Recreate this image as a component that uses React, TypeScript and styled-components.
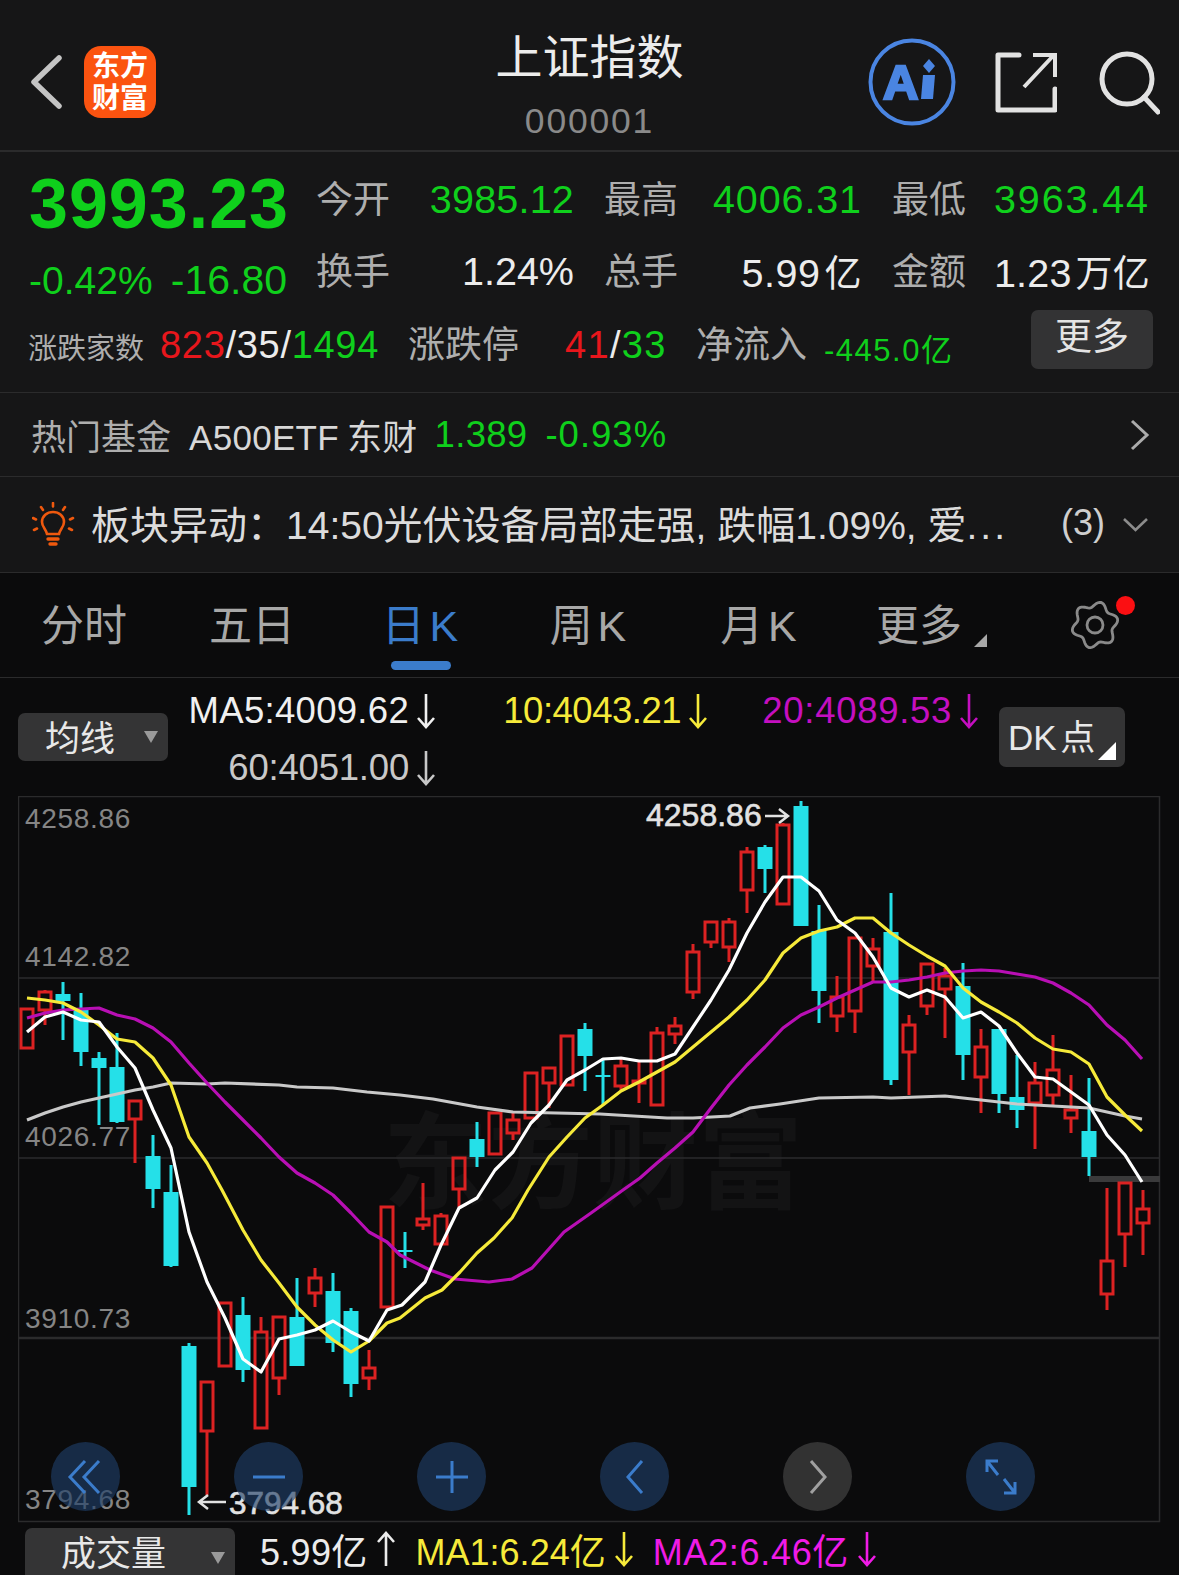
import React from 'react'
import styled, { createGlobalStyle } from 'styled-components'

const GREEN = '#0fd01c'
const RED = '#e8161c'
const CANDLE_RED = '#dc2222'
const CYAN = '#25e0e8'
const YELLOW = '#f6ea3a'
const MAGENTA = '#f01be6'
const BLUE = '#3b7ccb'

const GlobalStyle = createGlobalStyle`
  html, body {
    margin: 0;
    padding: 0;
    background: #0b0b0c;
  }
  * {
    box-sizing: border-box;
  }
`

const Page = styled.div`
  width: 1179px;
  height: 1575px;
  overflow: hidden;
  background: #0b0b0c;
  color: #ececec;
  font-family: 'Liberation Sans', 'Noto Sans CJK SC', sans-serif;
`

const Header = styled.header`
  height: 152px;
  padding-top: 14px;
  display: grid;
  grid-template-columns: 1fr auto 1fr;
  align-items: center;
  background: #161617;
  border-bottom: 2px solid #2b2b2c;
`

const HeaderLeft = styled.div`
  display: flex;
  align-items: center;
  padding-left: 30px;
  gap: 22px;
`

const Logo = styled.div`
  width: 72px;
  height: 72px;
  border-radius: 17px;
  background: #fb5310;
  color: #fff;
  font-size: 28px;
  font-weight: 700;
  line-height: 32px;
  text-align: center;
  padding-top: 5px;
`

const TitleBlock = styled.div`
  text-align: center;
  margin-top: 5px;
`

const Title = styled.div`
  font-size: 47px;
  line-height: 60px;
  color: #ececec;
`

const Code = styled.div`
  font-size: 35.5px;
  line-height: 40px;
  margin-top: 13px;
  letter-spacing: 1.8px;
  color: #8a8a8a;
`

const HeaderRight = styled.div`
  display: flex;
  align-items: center;
  justify-content: flex-end;
  padding-right: 19px;
  gap: 39px;
`

const Quote = styled.section`
  height: 241px;
  background: #161617;
  border-bottom: 1px solid #2b2b2c;
  padding-top: 11px;
`

const QuoteTop = styled.div`
  display: flex;
  height: 144px;
  padding-left: 29px;
`

const PriceBlock = styled.div`
  width: 258px;
  margin-right: 29px;
`

const Price = styled.div`
  font-size: 70px;
  line-height: 82px;
  font-weight: 700;
  letter-spacing: 1px;
  color: ${GREEN};
  white-space: nowrap;
`

const ChangeRow = styled.div`
  display: flex;
  justify-content: space-between;
  align-items: baseline;
  line-height: 70px;
  color: ${GREEN};
`

const ChangePct = styled.span`
  font-size: 39px;
`

const ChangeVal = styled.span`
  font-size: 41px;
`

const StatsGrid = styled.div`
  display: grid;
  grid-template-columns: repeat(3, 258px);
  grid-auto-rows: 72px;
  column-gap: 30px;
`

const Stat = styled.div`
  display: flex;
  justify-content: space-between;
  align-items: center;
`

const StatLabel = styled.span`
  font-size: 37px;
  padding-bottom: 4px;
  color: #aeaeae;
`

const StatValue = styled.span<{ $green?: boolean; $track?: number }>`
  font-size: 39.5px;
  letter-spacing: ${(p) => p.$track ?? 0.2}px;
  color: ${(p) => (p.$green ? GREEN : '#ececec')};
  white-space: nowrap;
`

const Unit = styled.span`
  font-size: 37px;
  margin-left: 4px;
`

const BreadthRow = styled.div`
  display: grid;
  grid-template-columns: 132px 248px 157px 131px 128px 207px 122px;
  align-items: center;
  height: 76px;
  padding-left: 28px;
`

const SmallLabel = styled.span`
  font-size: 29px;
  color: #aeaeae;
  padding-top: 2px;
`

const BreadthLabel = styled.span`
  font-size: 37px;
  color: #aeaeae;
  padding-bottom: 6px;
`

const BreadthValue = styled.span<{ $track: number }>`
  font-size: 38px;
  letter-spacing: ${(p) => p.$track}px;
  color: #ececec;
  white-space: nowrap;
`

const Tone = styled.span<{ $color: string }>`
  color: ${(p) => p.$color};
`

const Inflow = styled.span`
  font-size: 31px;
  letter-spacing: 1.5px;
  color: ${GREEN};
  padding-top: 4px;
  white-space: nowrap;
`

const MoreButton = styled.div`
  height: 59px;
  margin-top: -12px;
  border-radius: 7px;
  background: #333334;
  font-size: 37px;
  line-height: 56px;
  text-align: center;
  color: #e4e4e4;
`

const FundRow = styled.div`
  height: 84px;
  display: flex;
  align-items: center;
  padding: 0 29px 0 31px;
  background: #161617;
  border-bottom: 1px solid #2b2b2c;
  white-space: nowrap;
`

const FundLabel = styled.span`
  font-size: 35px;
  color: #aeaeae;
  margin-right: 18px;
`

const FundName = styled.span`
  font-size: 35px;
  letter-spacing: 0.3px;
  word-spacing: -2px;
  color: #d8d8d8;
  margin-right: 17px;
`

const FundValue = styled.span<{ $track: number }>`
  font-size: 36.5px;
  letter-spacing: ${(p) => p.$track}px;
  color: ${GREEN};
  margin-right: 18px;
`

const RowEnd = styled.span`
  margin-left: auto;
  display: flex;
  align-items: center;
`

const NoticeRow = styled.div`
  height: 96px;
  display: flex;
  align-items: center;
  padding: 0 31px 0 32px;
  background: #161617;
  border-bottom: 1px solid #2b2b2c;
  white-space: nowrap;
`

const NoticeText = styled.span`
  font-size: 39px;
  margin-left: 15px;
  padding-bottom: 5px;
  color: #dcdcdc;
`

const Dots = styled.span`
  letter-spacing: 3px;
`

const NoticeCount = styled.span`
  font-size: 36px;
  padding-bottom: 4px;
  color: #cfcfcf;
  margin-right: 18px;
`

const Tabs = styled.nav`
  height: 105px;
  display: flex;
  align-items: center;
  border-bottom: 1px solid #2b2b2c;
`

const Tab = styled.div<{ $active?: boolean; $shift?: number; $push?: number }>`
  position: relative;
  width: 168px;
  height: 100%;
  display: flex;
  align-items: center;
  justify-content: center;
  padding-bottom: 6px;
  padding-right: ${(p) => p.$shift ?? 0}px;
  padding-left: ${(p) => p.$push ?? 0}px;
  font-size: 43px;
  word-spacing: -7px;
  color: ${(p) => (p.$active ? BLUE : '#a8a8a8')};
  white-space: nowrap;
`

const TabLine = styled.span`
  position: absolute;
  left: 55px;
  bottom: 7px;
  width: 60px;
  height: 9px;
  border-radius: 5px;
  background: ${BLUE};
`

const CornerMark = styled.span<{ $color: string; $size: number }>`
  position: absolute;
  width: 0;
  height: 0;
  border-style: solid;
  border-width: 0 0 ${(p) => p.$size}px ${(p) => p.$size}px;
  border-color: transparent transparent ${(p) => p.$color} transparent;
`

const TabCorner = styled(CornerMark)`
  right: 21px;
  bottom: 30px;
`

const GearWrap = styled.div`
  position: relative;
  margin-left: 62px;
  width: 50px;
  height: 50px;
`

const RedDot = styled.span`
  position: absolute;
  left: 46px;
  top: -4px;
  width: 19px;
  height: 19px;
  border-radius: 50%;
  background: #fb0f12;
`

const MaPanel = styled.div`
  height: 118px;
  display: flex;
  align-items: flex-start;
  padding-left: 18px;
`

const DropButton = styled.div<{ $width: number }>`
  position: relative;
  width: ${(p) => p.$width}px;
  background: #343435;
  border-radius: 7px;
  color: #e8e8e8;
  flex: none;
`

const MaButton = styled(DropButton)`
  height: 48px;
  margin-top: 35px;
  font-size: 35px;
  line-height: 52px;
  padding-left: 27px;
`

const DownMark = styled.span`
  position: absolute;
  top: 50%;
  margin-top: -6px;
  right: 10px;
  width: 0;
  height: 0;
  border-style: solid;
  border-width: 12px 7px 0 7px;
  border-color: #9a9a9a transparent transparent transparent;
`

const MaGrid = styled.div`
  display: grid;
  grid-template-columns: 248px 272px 271px;
  grid-auto-rows: 57px;
  justify-items: end;
  margin: 4px 0 0 20px;
`

const MaItem = styled.div<{ $color: string; $track?: number }>`
  display: flex;
  align-items: center;
  gap: 7px;
  font-size: 36.5px;
  letter-spacing: ${(p) => p.$track ?? 0}px;
  color: ${(p) => p.$color};
  white-space: nowrap;
`

const DkButton = styled(DropButton)`
  height: 60px;
  margin: 29px 0 0 20px;
  font-size: 35px;
  line-height: 62px;
  padding-left: 9px;
  word-spacing: -6px;
  white-space: nowrap;
`

const DkCorner = styled(CornerMark)`
  right: 9px;
  bottom: 7px;
`

const ChartWrap = styled.div`
  position: relative;
  height: 727px;
  margin-left: 18px;
  width: 1143px;
`

const ChartSvg = styled.svg`
  display: block;
`

const ChartControls = styled.div`
  position: absolute;
  left: 33px;
  top: 646px;
  display: flex;
  gap: 114px;
`

const RoundButton = styled.div<{ $muted?: boolean }>`
  width: 69px;
  height: 69px;
  border-radius: 50%;
  background: ${(p) => (p.$muted ? 'rgba(70,70,70,.68)' : 'rgba(32,62,103,.64)')};
  display: flex;
  align-items: center;
  justify-content: center;
`

const VolumeRow = styled.div`
  height: 60px;
  display: flex;
  align-items: flex-start;
  padding: 5px 0 0 25px;
  white-space: nowrap;
`

const VolumeButton = styled(DropButton)`
  height: 60px;
  font-size: 35px;
  line-height: 52px;
  padding-left: 36px;
`

const VolumeMarks = styled.div`
  display: flex;
  align-items: center;
  height: 42px;
  margin-left: 25px;
`

const VolumeItem = styled.span<{ $color: string; $gap: number; $track: number }>`
  display: flex;
  align-items: center;
  gap: 8px;
  font-size: 36px;
  letter-spacing: ${(p) => p.$track}px;
  color: ${(p) => p.$color};
  margin-right: ${(p) => p.$gap}px;
`

const Arrow = ({ color, up }: { color: string; up?: boolean }) => (
  <svg width="20" height="36" viewBox="0 0 20 36" style={up ? { transform: 'rotate(180deg)' } : undefined}>
    <path d="M10 1V34M2 25L10 34L18 25" fill="none" stroke={color} strokeWidth="2.6" />
  </svg>
)

const BackIcon = () => (
  <svg width="32" height="54" viewBox="0 0 32 54">
    <path d="M29 3L4 27L29 51" fill="none" stroke="#c4c4c4" strokeWidth="5.5" strokeLinecap="round" strokeLinejoin="round" />
  </svg>
)

const AiIcon = () => (
  <svg width="88" height="88" viewBox="0 0 88 88">
    <circle cx="44" cy="44" r="41.5" fill="none" stroke="#4a85e2" strokeWidth="4" />
    <text x="15" y="61" fontFamily="Liberation Sans" fontWeight="700" fontSize="49" fill="#4a85e2" stroke="#4a85e2" strokeWidth="2.500">A</text>
    <path d="M55 37H67L65 61H53Z" fill="#4a85e2" />
    <path d="M61 21L67 28L61 35L55 28Z" fill="#4a85e2" />
  </svg>
)

const ShareIcon = () => (
  <svg width="62" height="62" viewBox="0 0 62 62">
    <path d="M24 4H3V59H60V38" fill="none" stroke="#e2e2e2" strokeWidth="5" strokeLinecap="round" strokeLinejoin="round" />
    <path d="M29 36L58 5M38 4H60V26" fill="none" stroke="#e2e2e2" strokeWidth="4" />
  </svg>
)

const SearchIcon = () => (
  <svg width="64" height="66" viewBox="0 0 64 66">
    <circle cx="31" cy="30" r="25" fill="none" stroke="#e2e2e2" strokeWidth="5" />
    <path d="M48 48L62 63" stroke="#e2e2e2" strokeWidth="5" strokeLinecap="round" />
  </svg>
)

const ChevronRight = () => (
  <svg width="20" height="32" viewBox="0 0 20 32">
    <path d="M2 2L17 16L2 30" fill="none" stroke="#ababab" strokeWidth="3" />
  </svg>
)

const ChevronDown = () => (
  <svg width="25" height="14" viewBox="0 0 25 14">
    <path d="M1 1L12.5 12L24 1" fill="none" stroke="#8c8c8c" strokeWidth="2.6" />
  </svg>
)

const BulbIcon = () => (
  <svg width="44" height="45" viewBox="0 0 44 45">
    <g fill="none" stroke="#f0590e" strokeWidth="2.6" strokeLinecap="round">
      <path d="M15 32C14 27 10 25 10 20C10 14 15 10 21 10C27 10 32 14 32 20C32 25 28 27 27 32Z" />
      <path d="M21 1V4.500M9 5L11 8M33 5L31 8M1 16L4 17.500M41 16L38 17.500M2 28L5 26.500M40 28L37 26.500" />
      <path d="M16 37H26M18 42H24" strokeWidth="3.4" />
    </g>
  </svg>
)

const gearPath = () => {
  const pts: string[] = []
  for (let i = 0; i <= 96; i++) {
    const t = (i / 96) * Math.PI * 2
    const r = 20.5 + 2.8 * Math.cos(6 * t + Math.PI / 2)
    pts.push(`${(25 + r * Math.cos(t)).toFixed(2)} ${(25 + r * Math.sin(t)).toFixed(2)}`)
  }
  return 'M' + pts.join('L') + 'Z'
}

const GearIcon = () => (
  <svg width="50" height="50" viewBox="0 0 50 50">
    <path d={gearPath()} fill="none" stroke="#8a8a8a" strokeWidth="2.8" />
    <circle cx="25" cy="25" r="8" fill="none" stroke="#8a8a8a" strokeWidth="2.8" />
  </svg>
)

// x, body top, body bottom, wick top, wick bottom, r = hollow red / c = filled cyan
type Candle = [number, number, number, number, number, 'r' | 'c']

const candles: Candle[] = [
  [27, 1009, 1048, 1009, 1048, 'r'], [45, 992, 1010, 990, 1025, 'r'], [63, 994, 1001, 982, 1040, 'c'],
  [81, 1010, 1052, 993, 1066, 'c'], [99, 1058, 1068, 1052, 1125, 'c'], [117, 1067, 1122, 1033, 1123, 'c'],
  [135, 1101, 1119, 1100, 1163, 'r'], [153, 1156, 1189, 1135, 1208, 'c'], [171, 1192, 1266, 1165, 1267, 'c'],
  [189, 1346, 1487, 1343, 1515, 'c'], [207, 1382, 1431, 1382, 1495, 'r'], [225, 1303, 1366, 1303, 1366, 'r'],
  [243, 1315, 1370, 1297, 1382, 'c'], [261, 1332, 1428, 1317, 1428, 'r'], [279, 1317, 1378, 1317, 1395, 'r'],
  [297, 1317, 1366, 1278, 1366, 'c'], [315, 1278, 1293, 1268, 1307, 'r'], [333, 1291, 1343, 1273, 1352, 'c'],
  [351, 1311, 1384, 1308, 1397, 'c'], [369, 1368, 1378, 1350, 1390, 'r'], [387, 1207, 1307, 1207, 1307, 'r'],
  [405, 1250, 1252, 1232, 1268, 'c'], [423, 1219, 1225, 1183, 1230, 'r'], [441, 1216, 1244, 1213, 1244, 'r'],
  [459, 1158, 1189, 1158, 1207, 'r'], [477, 1139, 1157, 1122, 1167, 'c'], [495, 1113, 1154, 1113, 1154, 'r'],
  [513, 1120, 1133, 1112, 1140, 'r'], [531, 1073, 1118, 1073, 1118, 'r'], [549, 1068, 1083, 1068, 1108, 'r'],
  [567, 1036, 1085, 1036, 1085, 'r'], [585, 1029, 1056, 1023, 1091, 'c'], [603, 1075, 1077, 1058, 1105, 'c'],
  [621, 1066, 1086, 1057, 1090, 'r'], [639, 1081, 1083, 1062, 1103, 'r'], [657, 1033, 1105, 1027, 1105, 'r'],
  [675, 1026, 1034, 1017, 1044, 'r'], [693, 952, 992, 944, 999, 'r'], [711, 922, 942, 922, 948, 'r'],
  [729, 922, 947, 918, 962, 'r'], [747, 852, 890, 847, 913, 'r'], [765, 847, 869, 845, 893, 'c'],
  [783, 825, 904, 823, 904, 'r'], [801, 806, 926, 801, 926, 'c'], [819, 931, 991, 905, 1023, 'c'],
  [837, 997, 1016, 976, 1032, 'r'], [855, 938, 1011, 938, 1033, 'r'], [873, 949, 966, 938, 982, 'r'],
  [891, 932, 1080, 893, 1085, 'c'], [909, 1025, 1052, 1015, 1095, 'r'], [927, 964, 1006, 964, 1015, 'r'],
  [945, 976, 989, 968, 1038, 'r'], [963, 986, 1055, 963, 1080, 'c'], [981, 1047, 1077, 1029, 1113, 'r'],
  [999, 1029, 1094, 1029, 1113, 'c'], [1017, 1097, 1110, 1055, 1128, 'c'], [1035, 1083, 1103, 1062, 1149, 'r'],
  [1053, 1070, 1095, 1035, 1105, 'r'], [1071, 1110, 1118, 1075, 1133, 'r'], [1089, 1131, 1157, 1078, 1176, 'c'],
  [1107, 1261, 1294, 1188, 1310, 'r'], [1125, 1183, 1234, 1183, 1267, 'r'], [1143, 1209, 1223, 1190, 1255, 'r'],
]

const ma5 = '27,1032 45,1017 63,1012 81,1020 99,1022 117,1047 135,1068 153,1110 171,1148 180,1190 189,1232 207,1282 225,1318 243,1359 261,1372 279,1339 297,1335 315,1330 333,1321 351,1332 369,1341 387,1310 402,1305 425,1282 441,1245 459,1208 477,1198 495,1170 513,1152 531,1123 549,1105 567,1080 585,1070 603,1059 621,1058 639,1061 657,1061 675,1054 693,1027 711,1000 729,970 747,933 765,902 783,877 801,877 819,891 837,920 855,933 873,957 891,988 909,997 927,990 945,997 963,1018 981,1012 999,1026 1017,1053 1035,1077 1053,1079 1071,1092 1089,1105 1107,1135 1125,1155 1142,1182'
const ma10 = '27,998 45,1000 63,1003 81,1012 99,1025 117,1039 135,1042 153,1058 171,1085 189,1137 207,1163 222,1190 243,1230 261,1260 279,1283 297,1307 315,1325 333,1340 351,1352 369,1341 387,1323 400,1318 425,1298 442,1290 460,1272 477,1253 494,1238 512,1218 528,1190 549,1157 567,1137 585,1118 603,1105 621,1091 639,1082 657,1072 675,1062 693,1047 711,1032 729,1017 747,1000 765,980 783,953 801,938 819,931 837,927 855,918 873,918 891,933 909,945 927,956 945,966 963,988 981,1002 999,1012 1017,1023 1035,1038 1053,1049 1071,1052 1089,1064 1107,1097 1125,1115 1142,1131'
const ma20 = '27,1018 45,1013 63,1010 81,1009 99,1008 117,1015 135,1019 153,1028 171,1042 189,1063 207,1083 225,1102 243,1120 261,1138 279,1157 297,1173 315,1183 333,1195 351,1213 369,1232 387,1242 400,1255 430,1270 455,1279 489,1282 512,1279 532,1268 564,1232 591,1213 623,1190 640,1178 657,1163 675,1148 693,1132 711,1108 729,1085 747,1065 765,1047 783,1028 801,1015 819,1007 837,998 855,990 873,982 891,982 909,980 927,977 945,973 963,971 981,970 999,971 1017,974 1035,977 1053,983 1071,993 1089,1005 1107,1025 1125,1040 1142,1059'
const ma60 = '27,1120 45,1113 63,1107 81,1102 99,1098 117,1094 135,1090 153,1087 171,1083 207,1084 225,1083 279,1085 297,1087 333,1088 367,1092 400,1095 433,1099 477,1107 513,1112 600,1114 667,1118 693,1118 730,1116 750,1108 780,1104 819,1098 873,1097 891,1098 945,1096 981,1100 1017,1104 1071,1107 1089,1108 1125,1116 1142,1119'

const axisLabels: [string, number][] = [
  ['4258.86', 828],
  ['4142.82', 966],
  ['4026.77', 1146],
  ['3910.73', 1328],
  ['3794.68', 1509],
]

const Chart = () => (
  <ChartSvg width="1143" height="727" viewBox="18 796 1143 727">
    <text x="383" y="1200" fontFamily="Noto Sans CJK SC" fontWeight="700" fontSize="105" fill="#131314">东方财富</text>
    <rect x="18.500" y="796.500" width="1141" height="725" fill="none" stroke="#2b2b2c" strokeWidth="1.500" />
    {[978, 1158, 1338].map((y) => (
      <line key={y} x1="18" x2="1160" y1={y} y2={y} stroke="#2b2b2c" strokeWidth={y === 1338 ? 2.5 : 1.5} />
    ))}
    <rect x="1089" y="1176" width="71" height="6" fill="#3a3a3b" />
    {candles.map(([x, top, bottom, wickTop, wickBottom, kind]) =>
      kind === 'c' ? (
        <g key={x} fill={CYAN}>
          <rect x={x - 1.5} y={wickTop} width="3" height={wickBottom - wickTop} />
          <rect x={x - 7.5} y={top} width="15" height={bottom - top} />
        </g>
      ) : (
        <g key={x}>
          <rect x={x - 1.5} y={wickTop} width="3" height={top - wickTop} fill={CANDLE_RED} />
          <rect x={x - 1.5} y={bottom} width="3" height={wickBottom - bottom} fill={CANDLE_RED} />
          <rect x={x - 6} y={top} width="12" height={bottom - top} fill="none" stroke={CANDLE_RED} strokeWidth="3" />
        </g>
      ),
    )}
    <polyline points={ma60} fill="none" stroke="#c9c9c9" strokeWidth="3.200" strokeLinejoin="round" />
    <polyline points={ma20} fill="none" stroke="#b80fb4" strokeWidth="3.200" strokeLinejoin="round" />
    <polyline points={ma10} fill="none" stroke={YELLOW} strokeWidth="3.200" strokeLinejoin="round" />
    <polyline points={ma5} fill="none" stroke="#fff" strokeWidth="3.200" strokeLinejoin="round" />
    {axisLabels.map(([label, y]) => (
      <text key={label} x="25" y={y} fontFamily="Liberation Sans" fontSize="28" letterSpacing="0.7" fill="#858585">{label}</text>
    ))}
    <text x="646" y="826" fontFamily="Liberation Sans" fontSize="32" fill="#e2e2e2" stroke="#e2e2e2" strokeWidth="0.600">4258.86</text>
    <path d="M765 816H786M779 809L788 816L779 823" fill="none" stroke="#e2e2e2" strokeWidth="2.500" />
    <text x="229" y="1514" fontFamily="Liberation Sans" fontSize="31.500" fill="#e2e2e2" stroke="#e2e2e2" strokeWidth="0.600">3794.68</text>
    <path d="M226 1502H201M208 1495L199 1502L208 1509" fill="none" stroke="#e2e2e2" strokeWidth="2.500" />
  </ChartSvg>
)

const ControlIcon = ({ d, color }: { d: string; color: string }) => (
  <svg width="46" height="46" viewBox="0 0 46 46">
    <path d={d} fill="none" stroke={color} strokeWidth="3" />
  </svg>
)

export default function App() {
  return (
    <Page>
      <GlobalStyle />
      <Header>
        <HeaderLeft>
          <BackIcon />
          <Logo>东方<br />财富</Logo>
        </HeaderLeft>
        <TitleBlock>
          <Title>上证指数</Title>
          <Code>000001</Code>
        </TitleBlock>
        <HeaderRight>
          <AiIcon />
          <ShareIcon />
          <SearchIcon />
        </HeaderRight>
      </Header>

      <Quote>
        <QuoteTop>
          <PriceBlock>
            <Price>3993.23</Price>
            <ChangeRow>
              <ChangePct>-0.42%</ChangePct>
              <ChangeVal>-16.80</ChangeVal>
            </ChangeRow>
          </PriceBlock>
          <StatsGrid>
            <Stat><StatLabel>今开</StatLabel><StatValue $green>3985.12</StatValue></Stat>
            <Stat><StatLabel>最高</StatLabel><StatValue $green $track={0.9}>4006.31</StatValue></Stat>
            <Stat><StatLabel>最低</StatLabel><StatValue $green $track={1.9}>3963.44</StatValue></Stat>
            <Stat><StatLabel>换手</StatLabel><StatValue $track={0}>1.24%</StatValue></Stat>
            <Stat><StatLabel>总手</StatLabel><StatValue $track={0.5}>5.99<Unit>亿</Unit></StatValue></Stat>
            <Stat><StatLabel>金额</StatLabel><StatValue>1.23<Unit>万亿</Unit></StatValue></Stat>
          </StatsGrid>
        </QuoteTop>
        <BreadthRow>
          <SmallLabel>涨跌家数</SmallLabel>
          <BreadthValue $track={0.7}>
            <Tone $color={RED}>823</Tone>/35/<Tone $color={GREEN}>1494</Tone>
          </BreadthValue>
          <BreadthLabel>涨跌停</BreadthLabel>
          <BreadthValue $track={1.3}>
            <Tone $color={RED}>41</Tone>/<Tone $color={GREEN}>33</Tone>
          </BreadthValue>
          <BreadthLabel>净流入</BreadthLabel>
          <Inflow>-445.0亿</Inflow>
          <MoreButton>更多</MoreButton>
        </BreadthRow>
      </Quote>

      <FundRow>
        <FundLabel>热门基金</FundLabel>
        <FundName>A500ETF 东财</FundName>
        <FundValue $track={0.3}>1.389</FundValue>
        <FundValue $track={1}>-0.93%</FundValue>
        <RowEnd><ChevronRight /></RowEnd>
      </FundRow>

      <NoticeRow>
        <BulbIcon />
        <NoticeText>板块异动：14:50光伏设备局部走强, 跌幅1.09%, 爱<Dots>...</Dots></NoticeText>
        <RowEnd>
          <NoticeCount>(3)</NoticeCount>
          <ChevronDown />
        </RowEnd>
      </NoticeRow>

      <Tabs>
        <Tab>分时</Tab>
        <Tab>五日</Tab>
        <Tab $active>日 K<TabLine /></Tab>
        <Tab>周 K</Tab>
        <Tab $push={5}>月 K</Tab>
        <Tab $shift={10}>更多<TabCorner $color="#a8a8a8" $size={13} /></Tab>
        <GearWrap>
          <GearIcon />
          <RedDot />
        </GearWrap>
      </Tabs>

      <MaPanel>
        <MaButton $width={150}>均线<DownMark /></MaButton>
        <MaGrid>
          <MaItem $color="#f0f0f0" $track={0.3}>MA5:4009.62<Arrow color="#f0f0f0" /></MaItem>
          <MaItem $color={YELLOW} $track={-0.5}>10:4043.21<Arrow color={YELLOW} /></MaItem>
          <MaItem $color="#c40fc0" $track={0.7}>20:4089.53<Arrow color="#c40fc0" /></MaItem>
          <MaItem $color="#c8c8c8" $track={-0.2}>60:4051.00<Arrow color="#c8c8c8" /></MaItem>
        </MaGrid>
        <DkButton $width={126}>DK 点<DkCorner $color="#fff" $size={18} /></DkButton>
      </MaPanel>

      <ChartWrap>
        <Chart />
        <ChartControls>
          <RoundButton><ControlIcon color={BLUE} d="M22 7L7 23L22 39M36 7L21 23L36 39" /></RoundButton>
          <RoundButton><ControlIcon color={BLUE} d="M7 23H39" /></RoundButton>
          <RoundButton><ControlIcon color={BLUE} d="M7 23H39M23 7V39" /></RoundButton>
          <RoundButton><ControlIcon color={BLUE} d="M30 7L16 23L30 39" /></RoundButton>
          <RoundButton $muted><ControlIcon color="#a0a0a0" d="M16 7L30 23L16 39" /></RoundButton>
          <RoundButton><ControlIcon color={BLUE} d="M9 18V7H20M9 7L20 21M37 28V39H26M37 39L26 25" /></RoundButton>
        </ChartControls>
      </ChartWrap>

      <VolumeRow>
        <VolumeButton $width={210}>成交量<DownMark /></VolumeButton>
        <VolumeMarks>
          <VolumeItem $color="#ececec" $gap={20} $track={0.3}>5.99亿<Arrow color="#ececec" up /></VolumeItem>
          <VolumeItem $color={YELLOW} $gap={19} $track={0}>MA1:6.24亿<Arrow color={YELLOW} /></VolumeItem>
          <VolumeItem $color={MAGENTA} $gap={0} $track={0.7}>MA2:6.46亿<Arrow color={MAGENTA} /></VolumeItem>
        </VolumeMarks>
      </VolumeRow>
    </Page>
  )
}
